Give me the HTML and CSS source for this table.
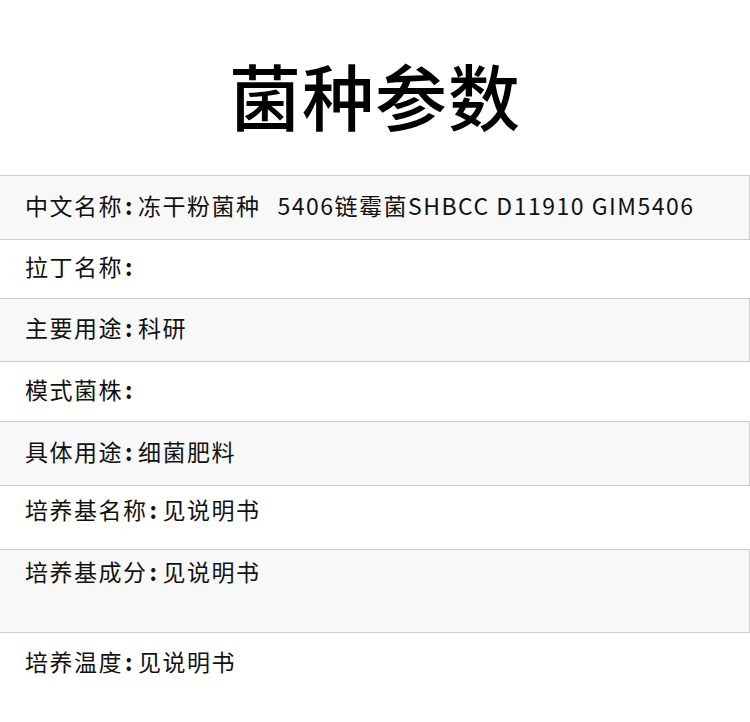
FILE: index.html
```html
<!DOCTYPE html>
<html lang="zh-CN">
<head>
<meta charset="utf-8">
<title>菌种参数</title>
<link rel="stylesheet" href="styles.css">
</head>
<body>
<div class="page">
  <h1 class="title">菌种参数</h1>
  <div class="spec">
    <div class="row grey h65 mid">中文名称<span class="colon">:</span>冻干粉菌种<span class="gap"></span>5406链霉菌SHBCC D11910 GIM5406</div>
    <div class="row h58 mid">拉丁名称<span class="colon">:</span></div>
    <div class="row grey h64 mid">主要用途<span class="colon">:</span>科研</div>
    <div class="row h59 mid">模式菌株<span class="colon">:</span></div>
    <div class="row grey h65 mid">具体用途<span class="colon">:</span>细菌肥料</div>
    <div class="row h63 top6">培养基名称<span class="colon">:</span>见说明书</div>
    <div class="row grey h84 top7">培养基成分<span class="colon">:</span>见说明书</div>
    <div class="row h90 top8">培养温度<span class="colon">:</span>见说明书</div>
  </div>
</div>
</body>
</html>
```

FILE: styles.css
```css
html, body {
  margin: 0;
  padding: 0;
  background: #ffffff;
}

body {
  font-family: "Noto Sans CJK SC", "Noto Sans", sans-serif;
  color: #111111;
  width: 750px;
  height: 722px;
  overflow: hidden;
}

.page {
  display: flex;
  flex-direction: column;
}

.title {
  margin: 0;
  height: 175px;
  padding-top: 12px;
  box-sizing: border-box;
  display: flex;
  align-items: center;
  justify-content: center;
  font-size: 72px;
  font-weight: 500;
  color: #000;
  letter-spacing: 1px;
  line-height: 1;
}

.spec {
  display: flex;
  flex-direction: column;
}

.row {
  box-sizing: border-box;
  display: flex;
  padding-left: 25px;
  font-size: 23px;
  letter-spacing: 1.5px;
  line-height: 30px;
  white-space: pre;
}

.colon {
  margin: 0 4px 0 2px;
  font-weight: 700;
}

.gap {
  display: inline-block;
  width: 17px;
}

.row.grey {
  background: #f8f8f8;
  border-top: 1px solid #cccccc;
  border-bottom: 1px solid #cccccc;
  border-right: 1px solid #cccccc;
}

.mid { align-items: center; padding-bottom: 6px; }

.h58 { height: 58px; }
.h59 { height: 59px; }
.h63 { height: 63px; }
.h64 { height: 64px; }
.h65 { height: 65px; }
.h84 { height: 84px; }
.h90 { height: 90px; }

.top6 { align-items: flex-start; padding-top: 8px; }
.top7 { align-items: flex-start; padding-top: 6px; }
.top8 { align-items: flex-start; padding-top: 13px; }
```
